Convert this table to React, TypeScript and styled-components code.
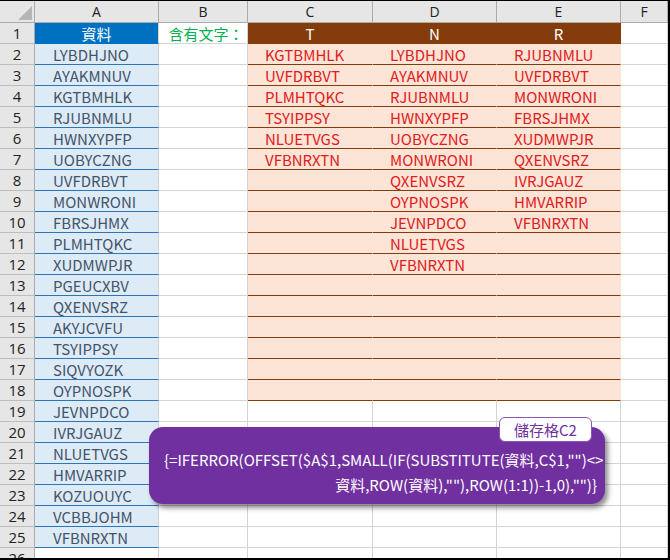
import React from "react";
import styled, { createGlobalStyle, css } from "styled-components";

const Global = createGlobalStyle`
  html, body { margin: 0; padding: 0; background: #ffffff; }
  body { font-family: "Noto Sans CJK TC", "Noto Sans", sans-serif; }
`;

const Frame = styled.div`
  position: relative;
  width: 670px;
  height: 560px;
  box-sizing: border-box;
  border-top: 1px solid #000;
  border-right: 2px solid #000;
  border-bottom: 2px solid #000;
  overflow: hidden;
  background: #fff;
`;

const Sheet = styled.div`
  display: grid;
  grid-template-columns: 35px 124px 89px 125px 124px 124px 47px;
  grid-template-rows: 22px repeat(26, 21px);
`;

type Kind =
  | "corner"
  | "colhead"
  | "rowhead"
  | "plain"
  | "listHead"
  | "list"
  | "label"
  | "brown"
  | "peach";

const Cell = styled.div<{ $kind: Kind }>`
  box-sizing: border-box;
  border-right: 1px solid #d4d4d4;
  border-bottom: 1px solid #d4d4d4;
  display: flex;
  align-items: center;
  font-family: "Noto Sans CJK TC", "Noto Sans", sans-serif;
  font-size: 14px;
  white-space: nowrap;
  overflow: hidden;
  position: relative;
  ${({ $kind }) => {
    switch ($kind) {
      case "corner":
        return css`
          background: #e6e6e6;
          border-right-color: #ababab;
          border-bottom-color: #ababab;
        `;
      case "colhead":
        return css`
          background: #e6e6e6;
          border-right-color: #ababab;
          border-bottom-color: #ababab;
          justify-content: center;
          color: #222;
          font-family: "Open Sans", "Noto Sans", sans-serif;
          font-size: 14px;
        `;
      case "rowhead":
        return css`
          background: #e6e6e6;
          border-right-color: #ababab;
          border-bottom-color: #bdbdbd;
          justify-content: center;
          color: #222;
          font-family: "Open Sans", "Noto Sans", sans-serif;
          font-size: 15px;
        `;
      case "listHead":
        return css`
          background: #0070c0;
          border-right-color: #d4d4d4;
          border-bottom-color: #0070c0;
          justify-content: center;
          color: #fff;
          font-size: 15px;
        `;
      case "list":
        return css`
          background: #ddebf7;
          border-bottom-color: #2e75b6;
          color: #44546a;
          padding-left: 18px;
          font-size: 15px;
        `;
      case "label":
        return css`
          justify-content: center;
          color: #00b050;
          font-size: 15px;
          padding-left: 6px;
        `;
      case "brown":
        return css`
          background: #843c0c;
          border-right-color: #843c0c;
          border-bottom-color: #843c0c;
          justify-content: center;
          color: #fff;
          font-size: 15px;
        `;
      case "peach":
        return css`
          background: #fce4d6;
          border-right-color: #fce4d6;
          border-bottom-color: #843c0c;
          color: #e0201c;
          padding-left: 17px;
          font-size: 15px;
        `;
      default:
        return css``;
    }
  }}
`;

const CornerMark = styled.svg`
  position: absolute;
  right: 2px;
  bottom: 2px;
`;

const Callout = styled.div`
  position: absolute;
  left: 149px;
  top: 426px;
  width: 456px;
  height: 77px;
  box-sizing: border-box;
  background: #7030a0;
  border-radius: 14px;
  box-shadow: 3px 4px 5px rgba(0, 0, 0, 0.45);
  padding: 20px 8px 0 15px;
  color: #fff;
  font-family: "Noto Sans CJK TC", "Noto Sans", sans-serif;
  font-size: 15px;
  line-height: 25px;
`;

const FormulaLine = styled.div<{ $align: "left" | "right" }>`
  text-align: ${({ $align }) => $align};
  white-space: nowrap;
`;

const Tag = styled.div`
  position: absolute;
  left: 499px;
  top: 416px;
  width: 93px;
  height: 25px;
  box-sizing: border-box;
  background: #fff;
  border: 1px solid #8a55b5;
  border-radius: 6px;
  display: flex;
  align-items: center;
  justify-content: center;
  color: #7030a0;
  font-family: "Noto Sans CJK TC", "Noto Sans", sans-serif;
  font-size: 15px;
`;

const listA = [
  "LYBDHJNO", "AYAKMNUV", "KGTBMHLK", "RJUBNMLU", "HWNXYPFP", "UOBYCZNG",
  "UVFDRBVT", "MONWRONI", "FBRSJHMX", "PLMHTQKC", "XUDMWPJR", "PGEUCXBV",
  "QXENVSRZ", "AKYJCVFU", "TSYIPPSY", "SIQVYOZK", "OYPNOSPK", "JEVNPDCO",
  "IVRJGAUZ", "NLUETVGS", "HMVARRIP", "KOZUOUYC", "VCBBJOHM", "VFBNRXTN",
];
const colT = ["KGTBMHLK", "UVFDRBVT", "PLMHTQKC", "TSYIPPSY", "NLUETVGS", "VFBNRXTN"];
const colN = [
  "LYBDHJNO", "AYAKMNUV", "RJUBNMLU", "HWNXYPFP", "UOBYCZNG", "MONWRONI",
  "QXENVSRZ", "OYPNOSPK", "JEVNPDCO", "NLUETVGS", "VFBNRXTN",
];
const colR = [
  "RJUBNMLU", "UVFDRBVT", "MONWRONI", "FBRSJHMX", "XUDMWPJR", "QXENVSRZ",
  "IVRJGAUZ", "HMVARRIP", "VFBNRXTN",
];

const letters = ["A", "B", "C", "D", "E", "F"];

export default function App() {
  const rows: React.ReactNode[] = [];
  rows.push(
    <Cell key="corner" $kind="corner">
      <CornerMark width="14" height="14" viewBox="0 0 14 14">
        <polygon points="14,0 14,14 0,14" fill="#b5b5b5" />
      </CornerMark>
    </Cell>
  );
  letters.forEach((l) =>
    rows.push(
      <Cell key={"h" + l} $kind="colhead">
        {l}
      </Cell>
    )
  );
  for (let r = 1; r <= 26; r++) {
    rows.push(
      <Cell key={"r" + r} $kind="rowhead">
        {r}
      </Cell>
    );
    if (r === 1) rows.push(<Cell key={r + "A"} $kind="listHead">資料</Cell>);
    else if (r <= 25) rows.push(<Cell key={r + "A"} $kind="list">{listA[r - 2]}</Cell>);
    else rows.push(<Cell key={r + "A"} $kind="plain" />);
    if (r === 1) rows.push(<Cell key={r + "B"} $kind="label">含有文字：</Cell>);
    else rows.push(<Cell key={r + "B"} $kind="plain" />);
    const cols = [colT, colN, colR];
    const heads = ["T", "N", "R"];
    cols.forEach((c, i) => {
      const k = r + "-" + i;
      if (r === 1) rows.push(<Cell key={k} $kind="brown">{heads[i]}</Cell>);
      else if (r <= 18) rows.push(<Cell key={k} $kind="peach">{c[r - 2] ?? ""}</Cell>);
      else rows.push(<Cell key={k} $kind="plain" />);
    });
    rows.push(<Cell key={r + "F"} $kind="plain" />);
  }

  return (
    <>
      <Global />
      <Frame>
        <Sheet>{rows}</Sheet>
        <Callout>
          <FormulaLine $align="left">
            {'{=IFERROR(OFFSET($A$1,SMALL(IF(SUBSTITUTE(資料,C$1,"")<>'}
          </FormulaLine>
          <FormulaLine $align="right">
            {'資料,ROW(資料),""),ROW(1:1))-1,0),"")}'}
          </FormulaLine>
        </Callout>
        <Tag>儲存格C2</Tag>
      </Frame>
    </>
  );
}
